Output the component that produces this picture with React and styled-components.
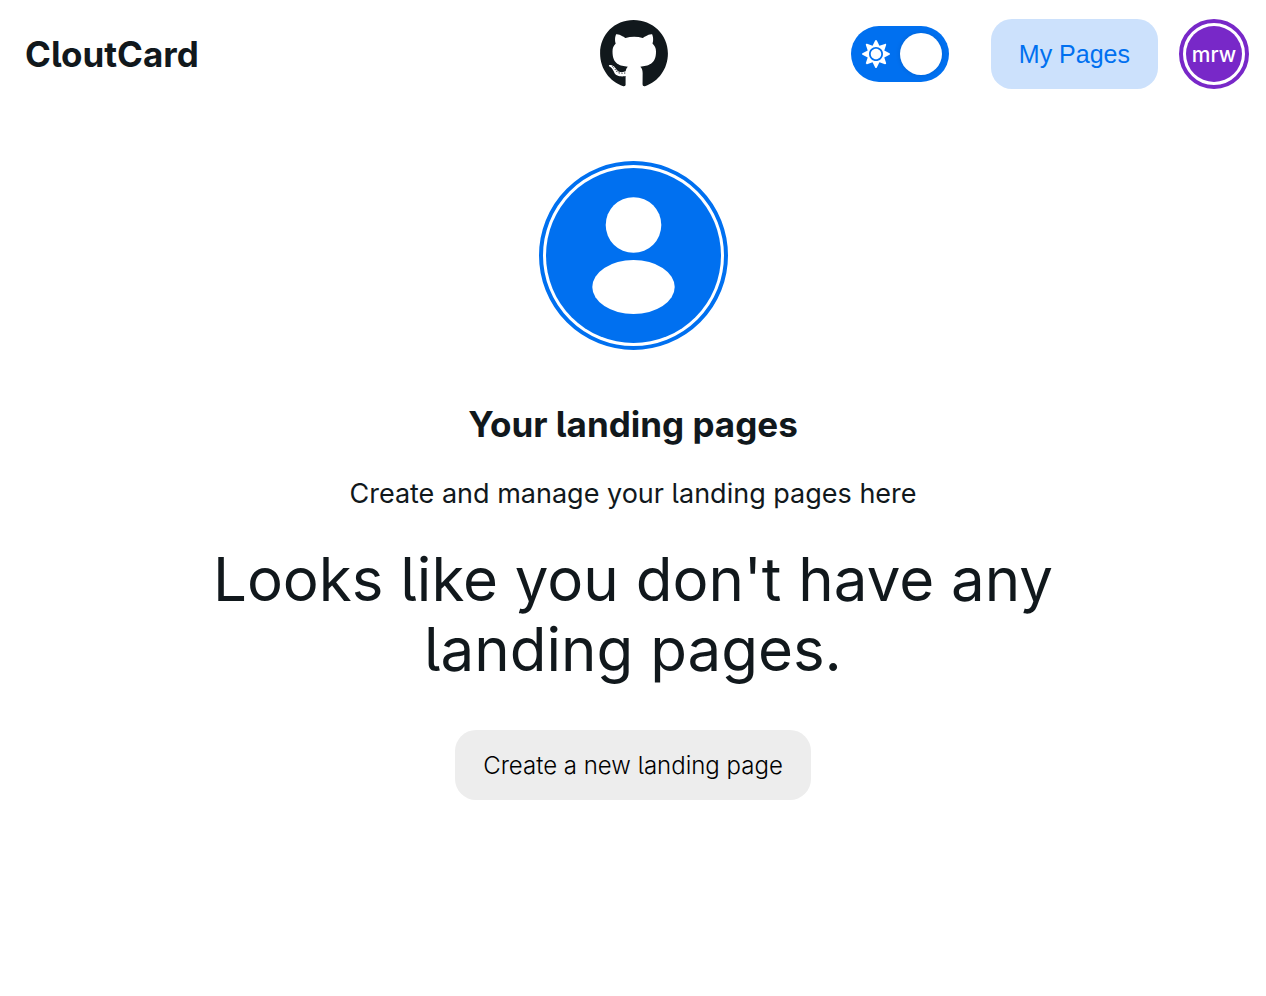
import React, { useState } from "react";
import styled, { createGlobalStyle } from "styled-components";
import { FaGithub, FaSun } from "react-icons/fa";

const GlobalStyle = createGlobalStyle`
  *, *::before, *::after { box-sizing: border-box; }
  body {
    margin: 0;
    background: #ffffff;
    color: #11181c;
    font-family: Inter, "Liberation Sans", sans-serif;
    font-feature-settings: "cv05" 1;
  }
  h1, h2, p { margin: 0; }
  button { border: 0; cursor: pointer; }
`;

const Nav = styled.nav`
  display: grid;
  grid-template-columns: 1fr auto 1fr;
  align-items: center;
  height: 108px;
  padding: 0 17px 0 18px;
`;

const Brand = styled.a`
  justify-self: start;
  padding: 0 7px;
  color: inherit;
  font-size: 35px;
  font-weight: 700;
  line-height: 52px;
  text-decoration: none;
`;

const RepoLink = styled.a`
  display: flex;
  color: inherit;
`;

const Actions = styled.div`
  display: flex;
  align-items: center;
  justify-content: flex-end;
`;

const Switch = styled.label`
  display: flex;
  align-items: center;
  justify-content: space-between;
  flex-direction: ${(p) => (p.$on ? "row" : "row-reverse")};
  width: 98px;
  height: 56px;
  margin-right: 42px;
  padding: 0 7px 0 11px;
  border-radius: 28px;
  background: ${(p) => (p.$on ? "#0070f0" : "#c1c8cd")};
  color: #ffffff;
  cursor: pointer;
`;

const SwitchInput = styled.input`
  position: absolute;
  width: 1px;
  height: 1px;
  margin: 0;
  opacity: 0;
`;

const Thumb = styled.span`
  width: 42px;
  height: 42px;
  border-radius: 50%;
  background: #ffffff;
  box-shadow: 0 0 5px rgba(0, 0, 0, 0.12);
`;

const Button = styled.button`
  height: 70px;
  padding: 0 28px;
  border-radius: 21px;
  font-family: ${(p) => (p.$primary ? '"Liberation Sans", Arial, sans-serif' : "inherit")};
  font-feature-settings: inherit;
  font-size: ${(p) => (p.$primary ? 25 : 24)}px;
  font-weight: ${(p) => (p.$primary ? 400 : 300)};
  line-height: 35px;
  white-space: nowrap;
  background: ${(p) => (p.$primary ? "#cce1fc" : "#ededed")};
  color: ${(p) => (p.$primary ? "#0070f0" : "#000000")};
`;

const Avatar = styled.span`
  display: flex;
  flex: none;
  width: ${(p) => p.$size}px;
  height: ${(p) => p.$size}px;
  padding: 3px;
  border: 4px solid ${(p) => p.$color};
  border-radius: 50%;
`;

const AvatarFill = styled.span`
  display: flex;
  flex: 1;
  align-items: center;
  justify-content: center;
  border-radius: 50%;
  background: ${(p) => p.$color};
  color: #ffffff;
  font-size: 21px;
  font-weight: 500;
`;

const AvatarButton = styled.button`
  margin-left: 21px;
  padding: 0;
  border-radius: 50%;
  background: none;
  font-family: inherit;
`;

const Main = styled.main`
  display: flex;
  flex-direction: column;
  align-items: center;
  max-width: 960px;
  margin: 0 auto;
  padding: 53px 24px 48px;
  text-align: center;
`;

const Title = styled.h1`
  margin-top: 48px;
  font-size: 35px;
  font-weight: 700;
  line-height: 52px;
`;

const Lead = styled.p`
  margin-top: 23px;
  font-size: 27px;
  font-weight: 400;
  line-height: 42px;
`;

const EmptyText = styled.h2`
  margin: 29px 0 46px;
  font-size: 60px;
  font-weight: 400;
  line-height: 70px;
`;

function UserIcon() {
  return (
    <svg width="119" height="119" viewBox="0 0 119 119" fill="currentColor" aria-hidden="true">
      <circle cx="59.5" cy="29" r="27.8" />
      <ellipse cx="59.5" cy="91" rx="41.2" ry="27" />
    </svg>
  );
}

export default function App() {
  const [light, setLight] = useState(true);

  return (
    <>
      <GlobalStyle />
      <Nav>
        <Brand href="#">CloutCard</Brand>
        <RepoLink href="#" aria-label="GitHub">
          <FaGithub size={70} />
        </RepoLink>
        <Actions>
          <Switch $on={light}>
            <SwitchInput
              type="checkbox"
              role="switch"
              aria-label="Light theme"
              checked={light}
              onChange={(e) => setLight(e.target.checked)}
            />
            <FaSun size={28} />
            <Thumb />
          </Switch>
          <Button type="button" $primary>My Pages</Button>
          <AvatarButton type="button">
            <Avatar $size={70} $color="#7828c8">
              <AvatarFill $color="#7828c8">mrw</AvatarFill>
            </Avatar>
          </AvatarButton>
        </Actions>
      </Nav>
      <Main>
        <Avatar $size={189} $color="#0070f0">
          <AvatarFill $color="#0070f0">
            <UserIcon />
          </AvatarFill>
        </Avatar>
        <Title>Your landing pages</Title>
        <Lead>Create and manage your landing pages here</Lead>
        <EmptyText>Looks like you don't have any landing pages.</EmptyText>
        <Button type="button">Create a new landing page</Button>
      </Main>
    </>
  );
}
